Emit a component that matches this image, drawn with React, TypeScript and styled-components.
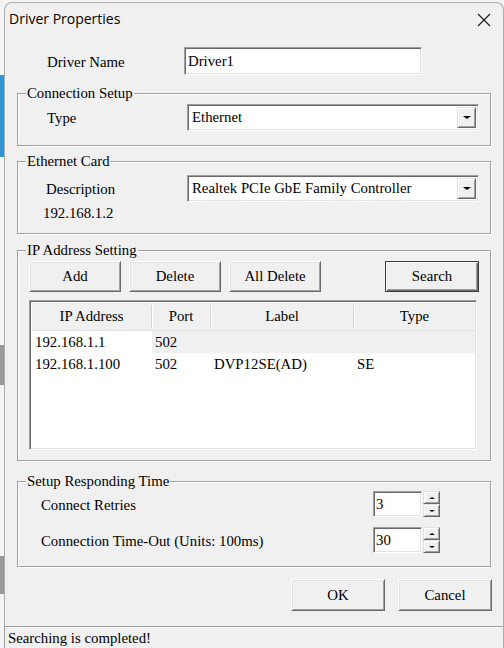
import React from "react";
import styled, { createGlobalStyle } from "styled-components";

const Global = createGlobalStyle`
  html, body { margin: 0; padding: 0; }
  body {
    width: 504px;
    height: 648px;
    overflow: hidden;
    background:
      linear-gradient(#2f95d3, #2f95d3) 0 75px / 4px 82px no-repeat,
      linear-gradient(#9a9a9a, #9a9a9a) 0 345px / 4px 40px no-repeat,
      linear-gradient(#9a9a9a, #9a9a9a) 0 556px / 4px 38px no-repeat,
      #f4f4f4;
  }
  #root { padding: 2px 0 0 4px; }
`;

const serif = `"Liberation Serif", "Times New Roman", serif`;

const Window = styled.div`
  box-sizing: border-box;
  width: 500px;
  height: 646px;
  background: #f0f0f0;
  border: 1px solid #aeaeae;
  border-bottom: none;
  border-radius: 8px 8px 0 0;
  display: flex;
  flex-direction: column;
  font-family: ${serif};
  font-size: 14.8px;
  color: #000;
`;

const TitleBar = styled.div`
  height: 31px;
  display: flex;
  align-items: center;
  justify-content: space-between;
  padding: 0 12px 0 4px;
  flex-shrink: 0;
`;

const Title = styled.span`
  font-family: "Open Sans", "Noto Sans", sans-serif;
  font-size: 14px;
`;

const CloseIcon = styled.svg`
  width: 14px;
  height: 14px;
  margin-top: 2px;
`;

const Content = styled.div`
  flex: 1;
  display: flex;
  flex-direction: column;
  padding: 13px 11px 0 12px;
`;

const NameRow = styled.div`
  display: grid;
  grid-template-columns: 167px 238px;
  align-items: center;
  height: 28px;
`;

const Label = styled.span<{ $indent?: number }>`
  padding-left: ${(p) => p.$indent ?? 0}px;
  padding-top: 2px;
  white-space: nowrap;
`;

const Sunken = styled.div`
  box-sizing: border-box;
  background: #fff;
  border-style: solid;
  border-width: 1px;
  border-color: #a0a0a0 #ffffff #ffffff #a0a0a0;
  box-shadow: inset 1px 1px 0 #696969, inset -1px -1px 0 #e3e3e3;
`;

const TextBox = styled(Sunken)`
  height: 28px;
  display: flex;
  align-items: center;
  padding: 0 3px;
`;

const Group = styled.div<{ $top: number; $height: number }>`
  position: relative;
  box-sizing: border-box;
  margin-top: ${(p) => p.$top}px;
  height: ${(p) => p.$height}px;
  border: 1px solid #a0a0a0;
  box-shadow: 1px 1px 0 #ffffff, inset 1px 1px 0 #ffffff;
  margin-right: 1px;
`;

const Legend = styled.span`
  position: absolute;
  left: 8px;
  top: -9px;
  background: #f0f0f0;
  padding: 0 1px;
  line-height: 16px;
  white-space: nowrap;
`;

const GroupBody = styled.div<{ $pad: string; $gap?: number }>`
  padding: ${(p) => p.$pad};
  display: flex;
  flex-direction: column;
  gap: ${(p) => p.$gap ?? 0}px;
`;

const SelectRow = styled.div`
  display: grid;
  grid-template-columns: 168px 1fr;
  align-items: center;
`;

const SelectBox = styled(Sunken)`
  height: 27px;
  display: flex;
  align-items: center;
  justify-content: space-between;
  padding: 2px 2px 2px 4px;
`;

const DropBtn = styled.div`
  box-sizing: border-box;
  width: 19px;
  height: 21px;
  background: #f0f0f0;
  border-style: solid;
  border-width: 1px;
  border-color: #e3e3e3 #696969 #696969 #e3e3e3;
  box-shadow: inset 1px 1px 0 #fff, inset -1px -1px 0 #a0a0a0;
  display: flex;
  align-items: center;
  justify-content: center;
`;

const Arrow = styled.span<{ $up?: boolean; $size?: number }>`
  width: 0;
  height: 0;
  border-left: ${(p) => p.$size ?? 4}px solid transparent;
  border-right: ${(p) => p.$size ?? 4}px solid transparent;
  ${(p) =>
    p.$up
      ? `border-bottom: ${(p.$size ?? 4) - 1}px solid #000;`
      : `border-top: ${(p.$size ?? 4) - 1}px solid #000;`}
`;

const IpText = styled.span`
  padding-left: 24px;
  margin-top: 3px;
`;

const ButtonRow = styled.div`
  display: flex;
  gap: 8px;
  align-items: center;
`;

const Button = styled.button<{ $w: number; $h: number; $default?: boolean }>`
  box-sizing: border-box;
  width: ${(p) => p.$w}px;
  height: ${(p) => p.$h}px;
  font-family: ${serif};
  font-size: 14.8px;
  color: #000;
  background: #f0f0f0;
  padding: 0;
  border-style: solid;
  border-width: 1px;
  border-color: ${(p) => (p.$default ? "#3c3c3c" : "#ffffff #696969 #696969 #ffffff")};
  box-shadow: ${(p) =>
    p.$default
      ? "inset 1px 1px 0 #fff, inset -1px -1px 0 #696969, inset -2px -2px 0 #a0a0a0"
      : "inset 1px 1px 0 #e3e3e3, inset -1px -1px 0 #a0a0a0"};
`;

const SearchButton = styled(Button)`
  margin-left: auto;
  margin-right: -2px;
`;

const List = styled(Sunken)`
  margin-top: 8px;
  height: 150px;
  padding: 2px 1px 1px 2px;
  display: flex;
  flex-direction: column;
`;

const cols = "120px 59px 143px 1fr";

const Header = styled.div`
  display: grid;
  grid-template-columns: ${cols};
  height: 27px;
  background: #f0f0f0;
  border-bottom: 1px solid #e0e0e0;
`;

const HeadCell = styled.div<{ $last?: boolean }>`
  display: flex;
  align-items: center;
  justify-content: center;
  border-right: ${(p) => (p.$last ? "none" : "1px solid #d5d5d5")};
  box-shadow: ${(p) => (p.$last ? "none" : "1px 0 0 #ffffff")};
  margin: 2px 0;
`;

const Row = styled.div<{ $hot?: boolean }>`
  display: grid;
  grid-template-columns: ${cols};
  height: 22px;
  align-items: stretch;
  background: ${(p) => (p.$hot ? "linear-gradient(90deg, #fff 0 120px, #f0f0f0 120px)" : "#fff")};
`;

const Cell = styled.div`
  display: flex;
  align-items: center;
  padding-left: 3px;
  white-space: nowrap;
`;

const SpinRow = styled.div`
  display: grid;
  grid-template-columns: 332px 49px 18px;
  align-items: center;
  height: 26px;
`;

const SpinField = styled(Sunken)`
  height: 26px;
  display: flex;
  align-items: center;
  padding: 0 2px;
`;

const SpinButtons = styled.div`
  display: flex;
  flex-direction: column;
  margin-left: 1px;
  height: 26px;
`;

const SpinBtn = styled.div`
  box-sizing: border-box;
  width: 17px;
  height: 13px;
  background: #f0f0f0;
  border-style: solid;
  border-width: 1px;
  border-color: #e3e3e3 #696969 #696969 #e3e3e3;
  box-shadow: inset 1px 1px 0 #fff, inset -1px -1px 0 #a0a0a0;
  display: flex;
  align-items: center;
  justify-content: center;
`;

const Footer = styled.div`
  display: flex;
  justify-content: flex-end;
  gap: 13px;
  margin-top: 12px;
`;

const Separator = styled.div`
  margin-top: 15px;
  height: 1px;
  background: #a0a0a0;
  box-shadow: 0 1px 0 #fff;
`;

const StatusBar = styled.div`
  height: 20px;
  display: flex;
  align-items: center;
  padding: 1px 0 0 3px;
  border-left: 1px solid #a0a0a0;
  margin-left: -1px;
`;

function Spin({ value }: { value: string }) {
  return (
    <>
      <SpinField>{value}</SpinField>
      <SpinButtons>
        <SpinBtn>
          <Arrow $up $size={3} />
        </SpinBtn>
        <SpinBtn>
          <Arrow $size={3} />
        </SpinBtn>
      </SpinButtons>
    </>
  );
}

export default function App() {
  return (
    <>
      <Global />
      <Window>
        <TitleBar>
          <Title>Driver Properties</Title>
          <CloseIcon viewBox="0 0 14 14">
            <path d="M1 1 L13 13 M13 1 L1 13" stroke="#1a1a1a" strokeWidth="1.1" fill="none" />
          </CloseIcon>
        </TitleBar>
        <Content>
          <NameRow>
            <Label $indent={30}>Driver Name</Label>
            <TextBox>Driver1</TextBox>
          </NameRow>

          <Group $top={18} $height={53}>
            <Legend>Connection Setup</Legend>
            <GroupBody $pad="10px 11px 0 1px">
              <SelectRow>
                <Label $indent={28}>Type</Label>
                <SelectBox>
                  Ethernet
                  <DropBtn>
                    <Arrow />
                  </DropBtn>
                </SelectBox>
              </SelectRow>
            </GroupBody>
          </Group>

          <Group $top={15} $height={73}>
            <Legend>Ethernet Card</Legend>
            <GroupBody $pad="13px 11px 0 1px">
              <SelectRow>
                <Label $indent={27}>Description</Label>
                <SelectBox>
                  Realtek PCIe GbE Family Controller
                  <DropBtn>
                    <Arrow />
                  </DropBtn>
                </SelectBox>
              </SelectRow>
              <IpText>192.168.1.2</IpText>
            </GroupBody>
          </Group>

          <Group $top={16} $height={211}>
            <Legend>IP Address Setting</Legend>
            <GroupBody $pad="10px 13px 0 11px">
              <ButtonRow>
                <Button $w={92} $h={31}>Add</Button>
                <Button $w={92} $h={31}>Delete</Button>
                <Button $w={92} $h={31}>All Delete</Button>
                <SearchButton $w={94} $h={31} $default>
                  Search
                </SearchButton>
              </ButtonRow>
              <List>
                <Header>
                  <HeadCell>IP Address</HeadCell>
                  <HeadCell>Port</HeadCell>
                  <HeadCell>Label</HeadCell>
                  <HeadCell $last>Type</HeadCell>
                </Header>
                <Row $hot>
                  <Cell>192.168.1.1</Cell>
                  <Cell>502</Cell>
                  <Cell />
                  <Cell />
                </Row>
                <Row>
                  <Cell>192.168.1.100</Cell>
                  <Cell>502</Cell>
                  <Cell>DVP12SE(AD)</Cell>
                  <Cell>SE</Cell>
                </Row>
              </List>
            </GroupBody>
          </Group>

          <Group $top={20} $height={86}>
            <Legend>Setup Responding Time</Legend>
            <GroupBody $pad="9px 0 0 23px" $gap={10}>
              <SpinRow>
                <Label>Connect Retries</Label>
                <Spin value="3" />
              </SpinRow>
              <SpinRow>
                <Label>Connection Time-Out (Units: 100ms)</Label>
                <Spin value="30" />
              </SpinRow>
            </GroupBody>
          </Group>

          <Footer>
            <Button $w={94} $h={32}>OK</Button>
            <Button $w={94} $h={32}>Cancel</Button>
          </Footer>
        </Content>
        <Separator />
        <StatusBar>Searching is completed!</StatusBar>
      </Window>
    </>
  );
}
